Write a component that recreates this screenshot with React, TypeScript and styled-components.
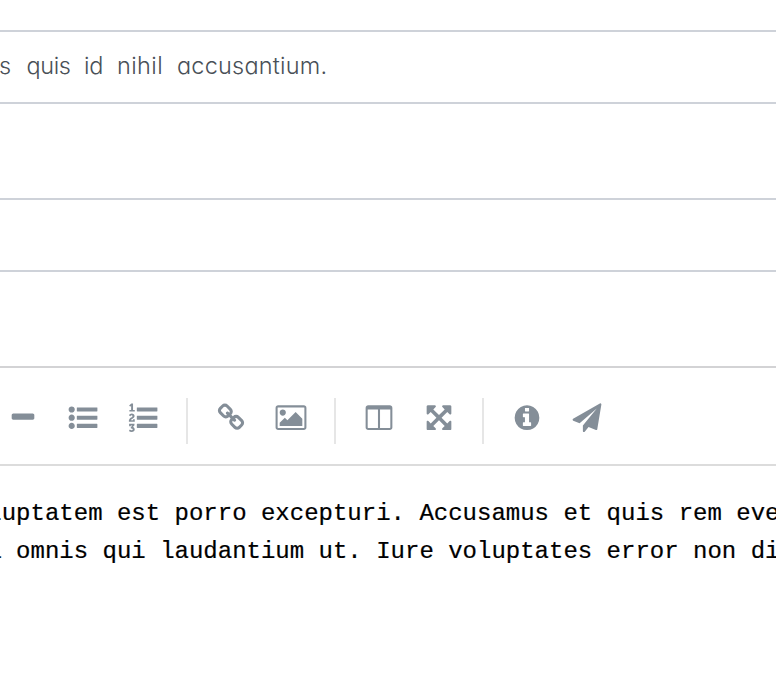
import React from "react";
import styled, { createGlobalStyle } from "styled-components";

const GlobalStyle = createGlobalStyle`
  * { box-sizing: border-box; }
  html, body { margin: 0; background: #fff; overflow: hidden; }
`;

const Page = styled.main`
  display: flex;
  flex-direction: column;
  width: 776px;
  height: 688px;
  overflow: hidden;
  background: #fff;
`;

const Row = styled.div<{ $height: number; $line?: string }>`
  flex: none;
  display: flex;
  align-items: center;
  height: ${(p) => p.$height}px;
  border-bottom: 2px solid ${(p) => p.$line ?? "#ced2d9"};
`;

const Title = styled.div`
  display: flex;
  margin-left: -1px;
  padding-bottom: 3px;
  color: #495057;
  font: 350 23.5px/36px Inter, "Open Sans", sans-serif;
  font-feature-settings: "cv11" 1;
  white-space: pre;
`;

const Word = styled.span<{ $width: number; $spacing: number }>`
  flex: none;
  width: ${(p) => p.$width}px;
  letter-spacing: ${(p) => p.$spacing}px;
`;

const Toolbar = styled.div`
  flex: none;
  display: flex;
  align-items: center;
  height: 98px;
  margin-left: -7px;
  padding-top: 10px;
  border-bottom: 2px solid #dcdcdc;
`;

const ToolButton = styled.button`
  flex: none;
  display: flex;
  align-items: center;
  justify-content: center;
  width: 60px;
  height: 60px;
  padding: 0 0 6px;
  border: 0;
  background: transparent;
  color: #848e98;
`;

const Glyph = styled.svg`
  display: block;
  width: 30px;
  height: 30px;
  overflow: visible;
  fill: currentColor;
`;

const Separator = styled.i`
  flex: none;
  width: 2px;
  height: 46px;
  margin: 0 13px;
  background: #e6e6e6;
`;

const Editor = styled.div`
  margin-left: -12.7px;
  padding-top: 29px;
  color: #000;
  font: 24px/38px "Liberation Mono", monospace;
  -webkit-text-stroke: 0.2px #000;
  white-space: pre;
`;

const bar = "v192q0 13-9.5 22.5t-22.5 9.5h-1216q-13 0-22.5-9.5t-9.5-22.5v-192q0-13 9.5-22.5t22.5-9.5h1216q13 0 22.5 9.5t9.5 22.5z";
const dot = "q0 80-56 136t-136 56-136-56-56-136 56-136 136-56 136 56 56 136z";
const bars = `M1792 288${bar}M1792 800${bar}M1792 1312${bar}`;

const icons = {
  minus: "M1600 736v192q0 40-28 68t-68 28h-1216q-40 0-68-28t-28-68v-192q0-40 28-68t68-28h1216q40 0 68 28t28 68z",
  bullets: `M384 1408${dot}M384 896${dot}M384 384${dot}${bars}`,
  numbers: `M381 1620q0 80-54.5 126t-135.5 46q-106 0-172-66l57-88q49 45 106 45 29 0 50.5-14.5t21.5-42.5q0-64-105-56l-26-56q8-10 32.5-43.5t42.5-54 37-38.5v-1q-16 0-48.5 1t-48.5 1v53h-106v-152h333v88l-95 115q51 12 81 49t30 88zM383 993v159h-362q-6-36-6-54 0-51 23.5-93t56.5-68 66-47.5 56.5-43.5 23.5-45q0-25-14.5-38.5t-39.5-13.5q-46 0-81 58l-85-59q24-51 71.5-79.5t105.5-28.5q73 0 123 41.5t50 112.5q0 50-34 91.5t-75 64.5-75.5 50.5-35.5 52.5h127v-60h105zM384 413v99h-335v-99h107q0-41 .5-121.5t.5-121.5v-12h-2q-8 17-50 54l-71-76 136-127h106v404h108z${bars}`,
  link: "M1520 1216q0-40-28-68l-208-208q-28-28-68-28-42 0-72 32 3 3 19 18.5t21.5 21.5 15 19 13 25.5 3.5 27.5q0 40-28 68t-68 28q-15 0-27.5-3.5t-25.5-13-19-15-21.5-21.5-18.5-19q-33 31-33 73 0 40 28 68l206 207q27 27 68 27 40 0 68-26l147-146q28-28 28-67zm-703-705q0-40-28-68l-206-207q-28-28-68-28-39 0-68 27l-147 146q-28 28-28 67 0 40 28 68l208 208q27 27 68 27 42 0 72-31-3-3-19-18.5t-21.5-21.5-15-19-13-25.5-3.5-27.5q0-40 28-68t68-28q15 0 27.5 3.5t25.5 13 19 15 21.5 21.5 18.5 19q33-31 33-73zm895 705q0 120-85 203l-147 146q-83 83-203 83-121 0-204-85l-206-207q-83-83-83-203 0-123 88-209l-88-88q-86 88-208 88-120 0-204-84l-208-208q-84-84-84-204t85-203l147-146q83-83 203-83 121 0 204 85l206 207q83 83 83 203 0 123-88 209l88 88q86-88 208-88 120 0 204 84l208 208q84 84 84 204z",
  image: "M576 576q0 80-56 136t-136 56-136-56-56-136 56-136 136-56 136 56 56 136zm1024 384v448h-1408v-192l320-320 160 160 512-512zm96-704h-1600q-13 0-22.5 9.5t-9.5 22.5v1216q0 13 9.5 22.5t22.5 9.5h1600q13 0 22.5-9.5t9.5-22.5v-1216q0-13-9.5-22.5t-22.5-9.5zm160 32v1216q0 66-47 113t-113 47h-1600q-66 0-113-47t-47-113v-1216q0-66 47-113t113-47h1600q66 0 113 47t47 113z",
  columns: "M224 1536h608v-1152h-640v1120q0 13 9.5 22.5t22.5 9.5zm1376-32v-1120h-640v1152h608q13 0 22.5-9.5t9.5-22.5zm128-1216v1216q0 66-47 113t-113 47h-1344q-66 0-113-47t-47-113v-1216q0-66 47-113t113-47h1344q66 0 113 47t47 113z",
  expand: "M1411 541l-355 355 355 355 144-144q29-31 70-14 39 17 39 59v448q0 26-19 45t-45 19h-448q-42 0-59-40-17-39 14-69l144-144-355-355-355 355 144 144q31 30 14 69-17 40-59 40h-448q-26 0-45-19t-19-45v-448q0-42 40-59 39-17 69 14l144 144 355-355-355-355-144 144q-19 19-45 19-12 0-24-5-40-17-40-59v-448q0-26 19-45t45-19h448q42 0 59 40 17 39-14 69l-144 144 355 355 355-355-144-144q-31-30-14-69 17-40 59-40h448q26 0 45 19t19 45v448q0 42-39 59-13 5-25 5-26 0-45-19z",
  info: "M1152 1376v-160q0-14-9-23t-23-9h-96v-512q0-14-9-23t-23-9h-320q-14 0-23 9t-9 23v160q0 14 9 23t23 9h96v320h-96q-14 0-23 9t-9 23v160q0 14 9 23t23 9h448q14 0 23-9t9-23zm-128-896v-160q0-14-9-23t-23-9h-192q-14 0-23 9t-9 23v160q0 14 9 23t23 9h192q14 0 23-9t9-23zm640 416q0 209-103 385.5t-279.5 279.5-385.5 103-385.5-103-279.5-279.5-103-385.5 103-385.5 279.5-279.5 385.5-103 385.5 103 279.5 279.5 103 385.5z",
  send: "M1764 11q33 24 27 64l-256 1536q-5 29-32 45-14 8-31 8-11 0-24-5l-453-185-242 295q-18 23-49 23-13 0-22-4-19-7-30.5-23.5t-11.5-36.5v-349l864-1059-1069 925-395-162q-37-14-40-55-2-40 32-59l1664-960q15-9 32-9 20 0 36 11z",
};

const Tool = ({ name }: { name: keyof typeof icons }) => (
  <ToolButton type="button" aria-label={name}>
    <Glyph viewBox="-37.3 -18 1866.6 1866.6">
      <path d={icons[name]} />
    </Glyph>
  </ToolButton>
);

export default function App() {
  return (
    <Page>
      <GlobalStyle />
      <Row $height={32} />
      <Row $height={72}>
        <Title>
          <Word $width={27.5} $spacing={0}>s</Word>
          <Word $width={57.5} $spacing={-0.4}>quis</Word>
          <Word $width={33} $spacing={-0.2}>id</Word>
          <Word $width={60} $spacing={0.4}>nihil</Word>
          <Word $width={160} $spacing={0.2}>accusantium.</Word>
        </Title>
      </Row>
      <Row $height={96} />
      <Row $height={72} />
      <Row $height={96} $line="#d3d3d5" />
      <Toolbar>
        <Tool name="minus" />
        <Tool name="bullets" />
        <Tool name="numbers" />
        <Separator />
        <Tool name="link" />
        <Tool name="image" />
        <Separator />
        <Tool name="columns" />
        <Tool name="expand" />
        <Separator />
        <Tool name="info" />
        <Tool name="send" />
      </Toolbar>
      <Editor>
        <div>luptatem est porro excepturi. Accusamus et quis rem eve</div>
        <div>a omnis qui laudantium ut. Iure voluptates error non di</div>
      </Editor>
    </Page>
  );
}
